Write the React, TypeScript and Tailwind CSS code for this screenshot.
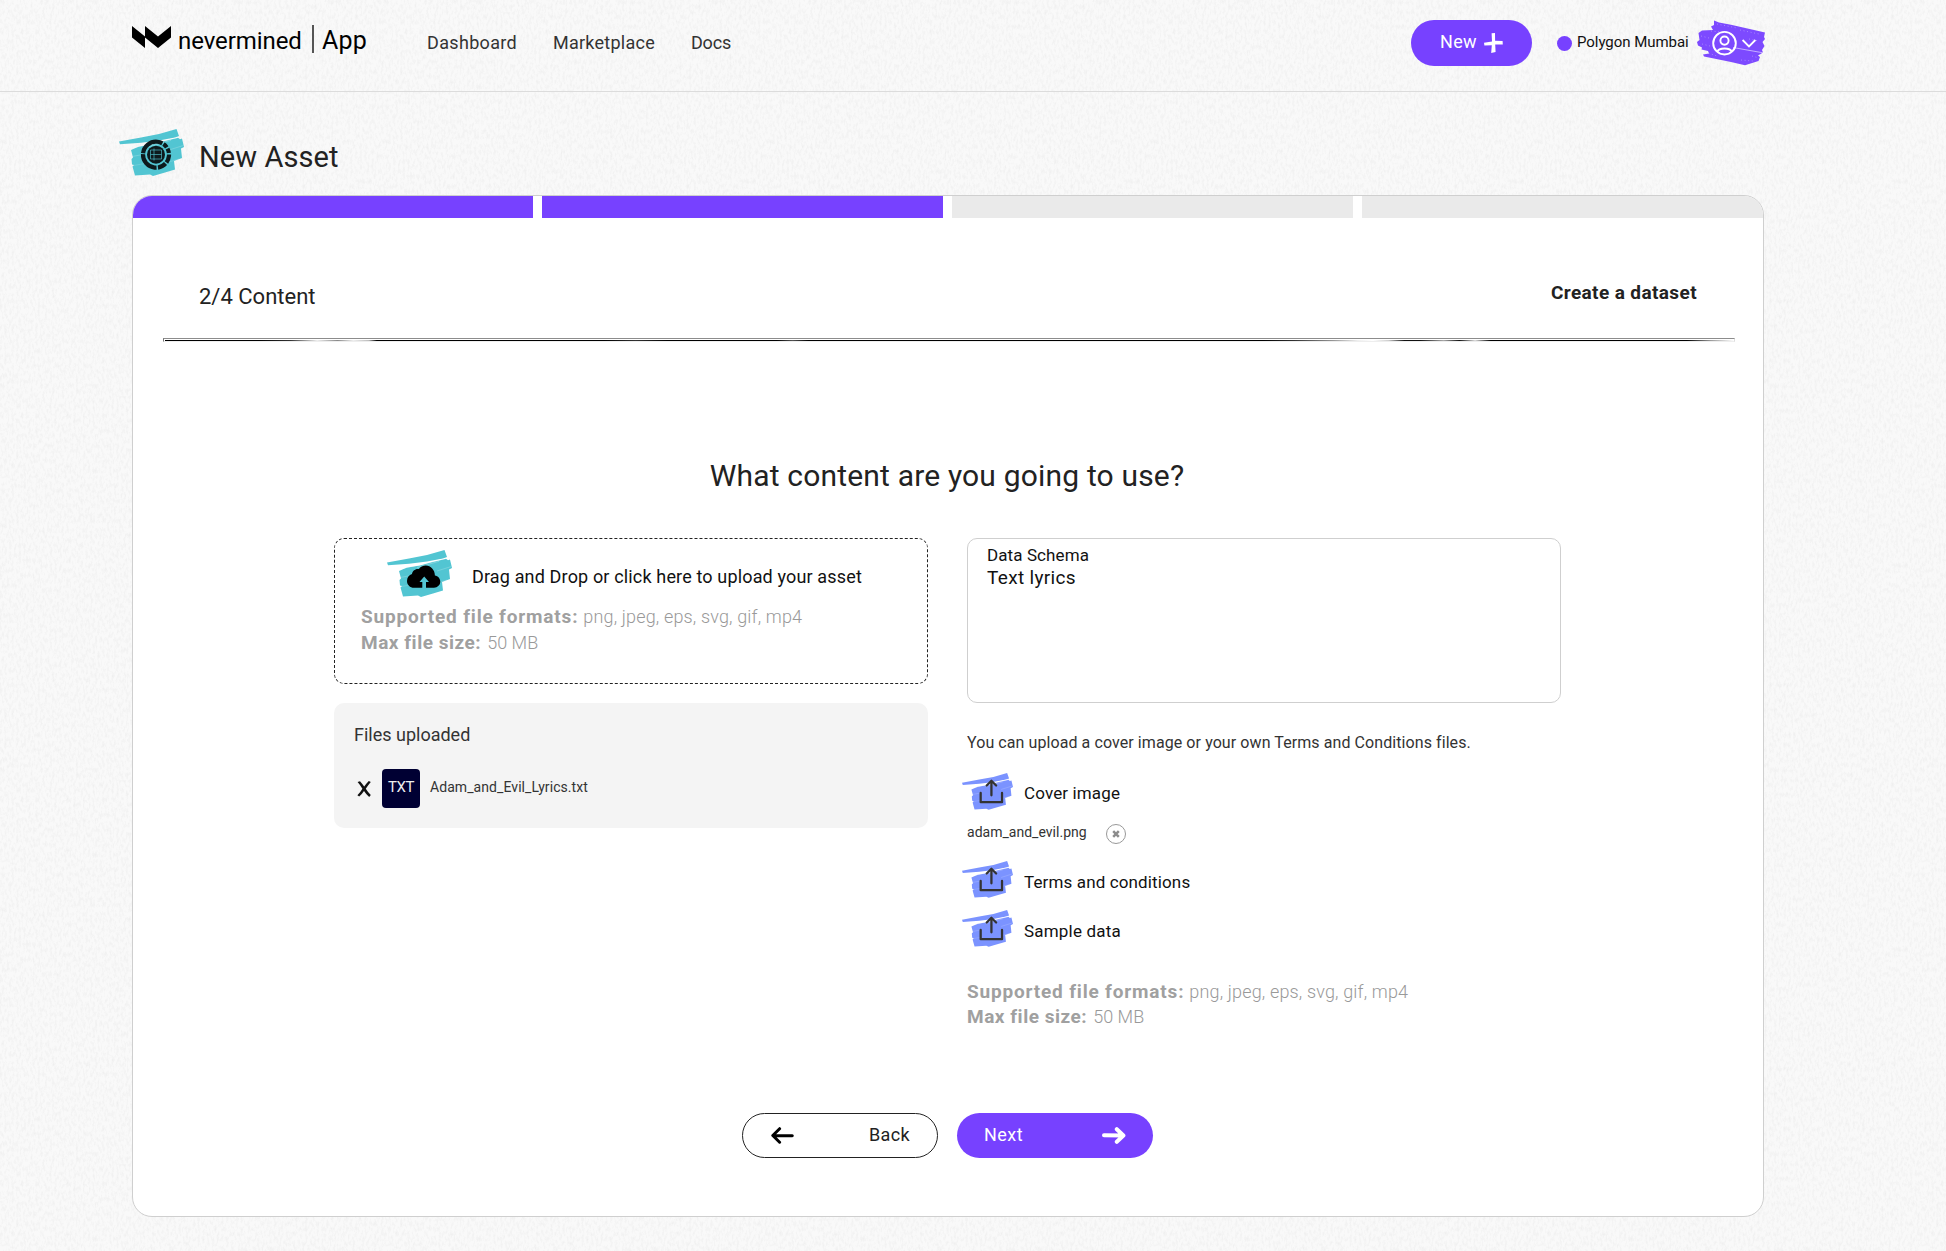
import React from "react";

function PaperTexture() {
  return (
    <svg className="absolute inset-0 -z-10 h-full w-full" aria-hidden="true">
      <defs>
        <filter id="grain" x="0" y="0" width="100%" height="100%">
          <feTurbulence type="fractalNoise" baseFrequency="0.42 0.2" numOctaves="4" seed="8" stitchTiles="stitch" />
          <feColorMatrix type="matrix" values="0 0 0 0 0.5  0 0 0 0 0.5  0 0 0 0 0.5  0.34 0 0 0 -0.145" />
        </filter>
        <pattern id="paper" width="384" height="384" patternUnits="userSpaceOnUse">
          <rect width="384" height="384" filter="url(#grain)" />
        </pattern>
      </defs>
      <rect width="100%" height="100%" fill="#f9f9f9" />
      <rect width="100%" height="100%" fill="url(#paper)" />
    </svg>
  );
}

function Brush({ className, color, children }: { className: string; color: string; children?: React.ReactNode }) {
  return (
    <svg viewBox="0 0 65 48" className={className} fill={color}>
      <path d="M0 13.4 L22 9.5 40 6 57.5 1 60 8 56 9.5 40 12.5 22 14.8 1 16.2Z" />
      <path d="M12 22 L20 18.5 33 16.5 45 13 59 9.8 61 11.2 63 10.5 65 19 62 20.5 63 30 55 33 56 41.5 46 44.5 34 48 31 46.5 16 47.5 13.5 38.5 15 37 13 36.5 12.5 31 14 29.5Z" />
      <g stroke="#fff" fill="none" opacity="0.5">
        <path d="M17 19 L36 15 60 9.2" strokeWidth="0.9" />
        <path d="M30 18.6 L52 12.3" strokeWidth="0.5" />
        <path d="M13 28.5 L24 26.5M50 22 L64 17.6" strokeWidth="0.4" />
        <path d="M14 37.6 L26 35.5M48 34.5 L60 31" strokeWidth="0.3" />
      </g>
      {children}
    </svg>
  );
}

function UploadIcon() {
  return (
    <Brush className="h-[38px] w-[51px] shrink-0" color="#7b93ff">
      <g fill="none" stroke="#333" strokeWidth="2.9" strokeLinejoin="round" strokeLinecap="round">
        <path d="M23.8 26.5 V38.3 H51 V26.5" />
        <path d="M37.5 29.5 V11.5 M31.5 17 L37.5 11 L43.5 17" />
      </g>
    </Brush>
  );
}

function UploadRow({ children, className }: { children: React.ReactNode; className: string }) {
  return (
    <div className={`-ml-[5px] flex h-[38px] text-[17px] leading-6 text-[#111] ${className}`}>
      <UploadIcon />
      <span className="ml-[11px] mt-[10px]">{children}</span>
    </div>
  );
}

function Formats({ className }: { className: string }) {
  return (
    <div className={`text-[18px] font-light text-[#999] ${className}`}>
      <p className="flex">
        <b className="text-[19px] font-bold tracking-[0.82px] text-[#a0a0a0]">Supported file formats:</b>
        <span className="ml-[5px] tracking-[0.15px]">png, jpeg, eps, svg, gif, mp4</span>
      </p>
      <p className="flex">
        <b className="text-[19px] font-bold tracking-[0.52px] text-[#a0a0a0]">Max file size:</b>
        <span className="ml-[6px]">50 MB</span>
      </p>
    </div>
  );
}

function Header() {
  return (
    <header className="flex h-[92px] items-start border-b border-[#dcdcdc] pl-[132px]">
      <svg className="mt-[26px] h-[22px] w-[39px]" viewBox="0 0 39 22">
        <path d="M0 0 L13 10.5 V22 L0 11.5Z M13 0 L26 10.5 39 0 V11.5 L26 22 13 11.5Z" />
      </svg>
      <div className="ml-[7px] mt-[27px] w-[125px] text-[24px] leading-7 tracking-[-0.08px] text-black">nevermined</div>
      <div className="ml-[9px] mt-[25px] h-[28px] w-[2px] bg-[#555]" />
      <div className="ml-[8px] mt-[27px] w-[46px] text-[25px] leading-7 tracking-[0.2px] text-black">App</div>
      <nav className="ml-[59px] mt-[31px] flex text-[18px] leading-6 text-[#333]">
        <a className="w-[126px] tracking-[0.33px]">Dashboard</a>
        <a className="w-[138px] tracking-[0.25px]">Marketplace</a>
        <a className="w-[44px] tracking-[-0.2px]">Docs</a>
      </nav>
      <button className="ml-auto mt-5 flex h-[46px] w-[121px] items-start rounded-full bg-[#7741ff] pl-[29px] text-[18px] leading-6 tracking-[0.36px] text-white">
        <span className="mt-[10px] w-[44px] text-left">New</span>
        <svg className="mt-[13px] h-[20px] w-[19px]" viewBox="0 0 19 20" fill="#fff">
          <path d="M7.6 0.3 L11 0 11.1 7.8 18.6 8 18.8 11.4 11.2 11.6 11.6 19 7.2 20 7.8 12.2 0.4 12.6 0 9.8 8 8.4Z" />
        </svg>
      </button>
      <div className="ml-[25px] mt-9 size-[15px] rounded-full bg-[#7741ff]" />
      <div className="ml-[5px] mt-[30px] w-[114px] whitespace-nowrap text-[15px] leading-6 tracking-[-0.05px] text-[#111]">Polygon Mumbai</div>
      <svg className="ml-[6px] mr-[181px] mt-5 h-[46px] w-[68px]" viewBox="0 0 68 46">
        <path
          fill="#7d4aff"
          d="M17 0.5 L22 2.6 34 4.8 68 12.5 67 17 68 19 65.5 22 67.5 26 65 30 66 32.5 61 35.5 63 37 61.5 41 48 45.3 34 42 7 36.5 6 34.5 12 33.5 11 31 4.5 29.5 5 27.5 1 25.5 0 22 2.5 20 1.5 13 5 10.5 16 10 14 6.5 17 5Z"
        />
        <g fill="none" stroke="#fff">
          <path d="M36 27.5 L66 32.8" strokeWidth="0.7" opacity="0.8" />
          <path d="M14 11 L24 12M43 10 L62 14M52 19 L62 21M8 32 L20 36M44 40 L56 41M20 4 L40 8M4 16 L12 18M5 24 L13 26M55 36 L62 38" strokeWidth="0.7" strokeDasharray="1 2.6" opacity="0.45" />
          <circle cx="27.5" cy="23.2" r="11.3" strokeWidth="1.9" />
          <circle cx="27.5" cy="20.6" r="4.1" strokeWidth="1.9" />
          <path d="M20.3 31.8 C21.6 27.3 33.4 27.3 34.7 31.8" strokeWidth="1.9" />
          <path d="M45.6 20 L52 26.4 58.4 20" strokeWidth="1.8" />
        </g>
      </svg>
    </header>
  );
}

function DatasetIcon() {
  return (
    <Brush className="h-[48px] w-[65px]" color="#52c5d2">
      <circle cx="37" cy="26.7" r="13" fill="none" stroke="#0d1a1d" strokeWidth="4.2" strokeDasharray="25.5 1.4 4.6 1.4 4.6 1.4 8.6 1.4 8.6 1.4 21.4 1.4" transform="rotate(186 37 26.7)" />
      <circle cx="37" cy="26.7" r="9" fill="#0d1a1d" />
      <path fill="none" stroke="#52c5d2" strokeWidth="0.8" opacity="0.8" d="M31.5 22 H42.5 M31.5 26.5 H42.5 M31.5 31 H42.5 M35 20.5 V32.5 M31.5 22 V31 M42.5 22 V31" />
    </Brush>
  );
}

export default function App() {
  return (
    <div className="relative isolate h-[1251px] w-full overflow-hidden font-['Roboto',sans-serif] text-[#222]">
      <PaperTexture />
      <Header />

      <div className="ml-[119px] mt-[36px] flex h-[67px] items-start">
        <DatasetIcon />
        <h1 className="ml-[15px] mt-[11px] text-[29px] leading-9 tracking-[0.1px]">New Asset</h1>
      </div>

      <main className="ml-[132px] h-[1022px] w-[1632px] overflow-hidden rounded-[20px] border border-[#cfcfcf] bg-white">
        <div className="grid h-[22px] grid-cols-[400px_401px_401px_401px] gap-[9px]">
          <div className="bg-[#7741ff]" />
          <div className="bg-[#7741ff]" />
          <div className="bg-[#eaeaea]" />
          <div className="bg-[#eaeaea]" />
        </div>

        <div className="flex h-[120px] items-start justify-between pl-[66px] pr-[66px] pt-[62px]">
          <h2 className="mt-[3px] text-[22px] leading-7">2/4 Content</h2>
          <strong className="mt-px text-[19px] font-bold leading-6 tracking-[0.39px]">Create a dataset</strong>
        </div>
        <div className="ml-[30px] h-[4px] w-[1572px] border border-b-[#eee] border-l-[#777] border-r-[#ddd] border-t-[#8c8c8c]">
          <div className="ml-px mt-px h-px bg-[linear-gradient(90deg,#000_0%,#000_6%,#333_8%,#eee_9.7%,#888_11%,#eee_12%,#bbb_13%,#000_13.5%,#000_28%,#333_30%,#000_32%,#000_39%,#555_40%,#000_41%,#000_70%,#333_72%,#999_74.5%,#eee_76%,#fff_77%,#ccc_78%,#111_79%,#111_80%,#aaa_81.5%,#111_82.5%,#ddd_83.5%,#000_84.5%,#000_97%,#999_98.5%,#fff_100%)]" />
        </div>

        <h3 className="mr-[2px] mt-[116px] text-center text-[30px] leading-9 tracking-[0.18px]">What content are you going to use?</h3>

        <div className="ml-[201px] mt-[44px] grid grid-cols-[594px_594px] gap-[39px]">
          <section>
            <div className="h-[146px] rounded-[10px] border border-dashed border-[#222] pt-[10px]">
              <div className="ml-[52px] flex h-[48px] text-[18px] leading-6 tracking-[0.15px] text-[#111]">
                <Brush className="h-[48px] w-[65px]" color="#52c5d2">
                  <path
                    fill="#000"
                    d="M35.3 38.7 V33 H32.5 L37.2 27.5 42 33 H39 V38.7 H47 C50.6 38.7 53.3 36 53.3 32.6 C53.3 29.4 51 26.8 47.9 26.4 C47.9 21 43.8 16.5 38.8 16.5 C35.8 16.5 33.4 17.8 31.9 20 C28.2 19.4 25.3 22 25 25 C22 26 20 28.7 20 31.9 C20 35.7 23 38.7 27 38.7Z"
                  />
                </Brush>
                <span className="ml-5 mt-4">Drag and Drop or click here to upload your asset</span>
              </div>
              <Formats className="ml-[26px] mt-[7px] leading-[26px]" />
            </div>

            <div className="mt-[19px] h-[125px] rounded-[10px] bg-[#f4f4f4] pl-5 pt-5 text-[#333]">
              <p className="text-[18px] leading-6">Files uploaded</p>
              <div className="mt-[22px] flex h-[39px] items-start">
                <svg className="ml-[3px] mt-[12px] h-[16px] w-[14px]" viewBox="0 0 14 16" fill="#111">
                  <path d="M0.6 1 L3 0.2 Q5 2.4 7.2 5.6 Q9.4 2.4 11.8 0 L13.8 1 Q11 4.2 8.8 7.8 Q11 11.4 13.8 14 L12.2 16 Q9 13.2 7 10 Q5 13.2 2.2 15.4 L0.4 14.2 Q3.4 11.4 5.4 7.8 Q3.4 4.2 0.6 1Z" />
                </svg>
                <div className="ml-[11px] h-[39px] w-[38px] rounded-[4px] bg-[#000033] pt-[6px] text-center text-[15px] leading-6 tracking-[-0.5px] text-[#eee]">TXT</div>
                <span className="ml-[10px] mt-2 text-[14px] leading-5 tracking-[0.07px]">Adam_and_Evil_Lyrics.txt</span>
              </div>
            </div>
          </section>

          <section>
            <div className="h-[165px] rounded-[10px] border border-[#cfcfcf] pl-[19px] pt-[5px] leading-[22px] text-[#111]">
              <p className="text-[17px] tracking-[0.1px]">Data Schema</p>
              <p className="mt-px text-[19px] tracking-[0.33px]">Text lyrics</p>
            </div>
            <p className="mt-[29px] text-[16px] leading-[22px] tracking-[0.08px] text-[#333]">
              You can upload a cover image or your own Terms and Conditions files.
            </p>
            <UploadRow className="mt-[18px] tracking-[0.13px]">
              <span className="-mt-px block">Cover image</span>
            </UploadRow>
            <div className="mt-[14px] flex h-5 items-start">
              <span className="-mt-[2px] w-[139px] text-[14px] leading-5 tracking-[0.02px] text-[#333]">adam_and_evil.png</span>
              <span className="flex size-5 items-center justify-center rounded-full border border-[#999]">
                <svg className="h-2 w-2" viewBox="0 0 8 8">
                  <path d="M1.2 1.2 L6.8 6.8 M6.8 1.2 L1.2 6.8" stroke="#8c8c8c" strokeWidth="2.5" />
                </svg>
              </span>
            </div>
            <UploadRow className="mt-[16px] tracking-[0.13px]">Terms and conditions</UploadRow>
            <UploadRow className="mt-[11px] tracking-[0.2px]">Sample data</UploadRow>
            <Formats className="mt-[32px] leading-[25px]" />
          </section>
        </div>

        <div className="ml-[609px] mt-[84px] flex gap-[19px] text-[18px] leading-6">
          <button className="flex h-[45px] w-[196px] items-start justify-between rounded-full border border-[#222] pl-[28px] pr-[27px] tracking-[0.36px]">
            <svg className="mt-[13px] h-[17px] w-[23px]" viewBox="0 0 23 17" fill="none" stroke="#000" strokeWidth="3" strokeLinecap="round" strokeLinejoin="round">
              <path d="M2 8.5 L21.3 8.7 M8.6 1.7 L1.8 8.5 8.6 15.2" />
            </svg>
            <span className="mt-[9px]">Back</span>
          </button>
          <button className="flex h-[45px] w-[196px] items-start justify-between rounded-full bg-[#7741ff] pl-[27px] pr-[27px] tracking-[0.45px] text-white">
            <span className="mt-[10px]">Next</span>
            <svg className="mt-[14px] h-[17px] w-[24px]" viewBox="0 0 24 17" fill="none" stroke="#fff" strokeWidth="4" strokeLinecap="round" strokeLinejoin="round">
              <path d="M2 8.3 L21 8.5 M14.8 2.2 L21.4 8.5 14.8 14.8" />
            </svg>
          </button>
        </div>
      </main>
    </div>
  );
}
